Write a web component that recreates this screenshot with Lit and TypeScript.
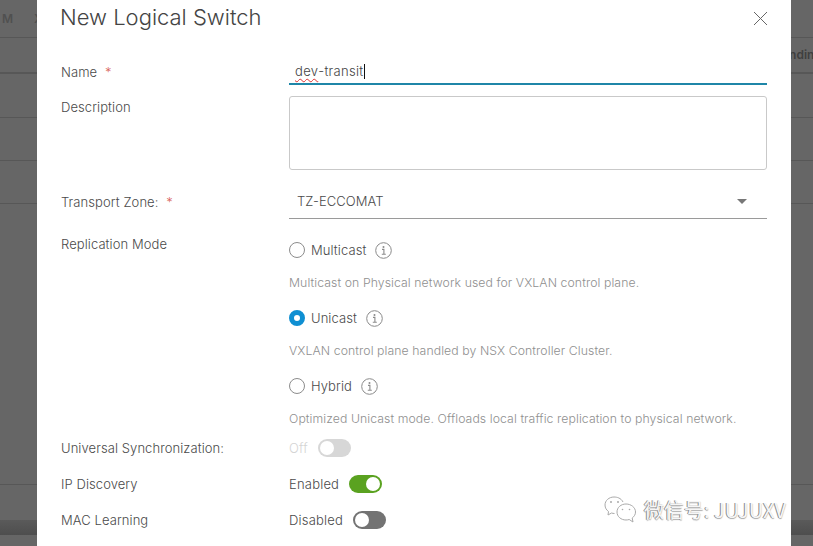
import { LitElement, css, html, svg } from 'lit';
import { customElement } from 'lit/decorators.js';

const infoIcon = svg`<svg class="info" viewBox="0 0 17 17" width="17" height="17" fill="none" stroke="#8a8a8a">
	<circle cx="8.500" cy="8.500" r="7.800" stroke-width="1"/>
	<path d="M7 7.400h1.900v4.700M6.800 12.300h4" stroke-width="1.100"/>
	<circle cx="8.500" cy="4.900" r="1" fill="#8a8a8a" stroke="none"/>
</svg>`;

@customElement('app-root')
export class AppRoot extends LitElement {
	static styles = css`
		:host {
			display: block;
			position: relative;
			width: 813px;
			height: 546px;
			overflow: hidden;
			background: #666;
			font-family: 'Inter', 'Liberation Sans', sans-serif;
			font-size: 13px;
			font-weight: 300;
			color: #4a4a4a;
		}

		/* page behind the modal */
		.page {
			display: flex;
			flex-direction: column;
			height: 100%;
		}
		.page-row {
			box-sizing: border-box;
			border-bottom: 1px solid #575757;
			display: flex;
			align-items: center;
			color: #3f3f3f;
			font-size: 12px;
			font-weight: 600;
			flex: none;
		}
		.r0 { height: 38px; padding-left: 2px; gap: 21px; color: #505050; }
		.r1 { height: 36px; padding-left: 778px; padding-bottom: 2px; white-space: nowrap; border-bottom-width: 2px; }
		.r2 { height: 44px; }
		.r3 { height: 43px; }
		.r4 { height: 43px; }
		.r5 { height: 281px; }
		.bar {
			margin-top: 35px;
			height: 15px;
			background: linear-gradient(#5a5a5a, #4e4e4e);
			flex: none;
		}

		.modal {
			position: absolute;
			left: 37px;
			top: 0;
			width: 754px;
			height: 546px;
			box-sizing: border-box;
			padding: 0 24px;
			background: #fff;
			overflow: hidden;
		}
		.head {
			display: flex;
			justify-content: space-between;
			align-items: center;
			height: 34px;
			margin-bottom: 20px;
		}
		h3 {
			margin: 0 0 0 -1px;
			font-size: 22px;
			font-weight: 300;
			color: #444;
		}
		.close { display: block; margin: 2px -1px 0 0; }

		.form {
			display: grid;
			grid-template-columns: 228px 478px;
			grid-auto-rows: auto;
			align-items: start;
			letter-spacing: 0.08px;
		}
		.label {
			line-height: 18px;
			white-space: nowrap;
		}
		.req {
			color: #d8645c;
			margin-left: 4px;
		}
		.name-input {
			box-sizing: border-box;
			height: 31px;
			border-bottom: 2px solid #1f86a8;
			padding: 8px 0 0 6px;
			line-height: 18px;
			letter-spacing: 0.3px;
			color: #444;
			display: flex;
		}
		.spell {
			text-decoration: underline wavy #d33;
			text-decoration-thickness: 1px;
			text-underline-offset: 2px;
		}
		.caret {
			width: 1px;
			height: 15px;
			margin-top: 2px;
			background: #111;
		}
		.textarea {
			box-sizing: border-box;
			height: 74px;
			margin-top: 11px;
			border: 1px solid #c9c9c9;
			border-radius: 3px;
		}
		.select {
			box-sizing: border-box;
			height: 37px;
			margin-top: 12px;
			padding: 2px 20px 0 8px;
			border-bottom: 1px solid #9a9a9a;
			display: flex;
			align-items: center;
			justify-content: space-between;
		}
		.arrow {
			width: 0;
			height: 0;
			border-left: 5px solid transparent;
			border-right: 5px solid transparent;
			border-top: 5px solid #777;
		}
		.radios {
			display: flex;
			flex-direction: column;
			margin-top: 21px;
		}
		.radio {
			display: flex;
			align-items: center;
			height: 20px;
		}
		.dot {
			box-sizing: border-box;
			width: 16px;
			height: 16px;
			border-radius: 50%;
			border: 1px solid #8c8c8c;
			margin-right: 6px;
		}
		.dot.on {
			border: 5px solid #0f8fd2;
		}
		.info { margin-left: 9px; }
		.hint {
			color: #8f8f8f;
			font-size: 12.250px;
			line-height: 18px;
			margin: 14px 0 16px;
			white-space: nowrap;
		}
		.hint.last { margin-bottom: 0; }
		.switch-row {
			display: flex;
			align-items: center;
			gap: 10px;
			height: 18px;
			letter-spacing: 0.2px;
		}
		.toggle {
			box-sizing: border-box;
			width: 33px;
			height: 18px;
			border-radius: 9px;
			padding: 2px;
			background: #737373;
			display: flex;
		}
		.toggle i {
			width: 14px;
			height: 14px;
			border-radius: 50%;
			background: #fff;
		}
		.toggle.green { background: #5aa220; justify-content: flex-end; }
		.toggle.off { background: #d7d7d7; }
		.muted { color: #d4d4d4; }

		.watermark {
			position: absolute;
			left: 604px;
			top: 495px;
			display: flex;
			align-items: center;
			gap: 7px;
			font-family: 'Noto Sans CJK SC', 'Liberation Sans', sans-serif;
			font-size: 20px;
			font-weight: 400;
			color: #f6f6f6;
			text-shadow: -1px 0 0 #8a8a8a, 0 1px 1px #aaa;
			white-space: nowrap;
		}
	`;

	render() {
		return html`
			<div class="page">
				<div class="page-row r0"><span>M</span><span>X</span></div>
				<div class="page-row r1">Binding</div>
				<div class="page-row r2"></div>
				<div class="page-row r3"></div>
				<div class="page-row r4"></div>
				<div class="page-row r5"></div>
				<div class="bar"></div>
			</div>

			<div class="modal">
				<div class="head">
					<h3>New Logical Switch</h3>
					<svg class="close" width="15" height="15" viewBox="0 0 15 15" stroke="#666" stroke-width="1" fill="none">
						<path d="M1 1l13 13M14 1L1 14"/>
					</svg>
				</div>

				<div class="form">
					<div class="label" style="margin-top:9px">Name <span class="req">*</span></div>
					<div class="name-input"><span class="spell">dev</span>-transit<span class="caret"></span></div>

					<div class="label" style="margin-top:13px">Description</div>
					<div class="textarea"></div>

					<div class="label" style="margin-top:23px">Transport Zone: <span class="req">*</span></div>
					<div class="select"><span>TZ-ECCOMAT</span><span class="arrow"></span></div>

					<div class="label" style="margin-top:16px">Replication Mode</div>
					<div class="radios">
						<div class="radio"><span class="dot"></span>Multicast ${infoIcon}</div>
						<div class="hint">Multicast on Physical network used for VXLAN control plane.</div>
						<div class="radio"><span class="dot on"></span>Unicast ${infoIcon}</div>
						<div class="hint">VXLAN control plane handled by NSX Controller Cluster.</div>
						<div class="radio"><span class="dot"></span>Hybrid ${infoIcon}</div>
						<div class="hint last">Optimized Unicast mode. Offloads local traffic replication to physical network.</div>
					</div>

					<div class="label" style="margin-top:11px">Universal Synchronization:</div>
					<div class="switch-row" style="margin-top:11px"><span class="muted">Off</span><span class="toggle off"><i></i></span></div>

					<div class="label" style="margin-top:18px">IP Discovery</div>
					<div class="switch-row" style="margin-top:18px"><span>Enabled</span><span class="toggle green"><i></i></span></div>

					<div class="label" style="margin-top:18px">MAC Learning</div>
					<div class="switch-row" style="margin-top:18px"><span>Disabled</span><span class="toggle"><i></i></span></div>
				</div>
			</div>

			<div class="watermark">
				<svg width="33" height="28" viewBox="0 0 33 28" fill="none" stroke="#aaa" stroke-width="1">
					<path d="M19 6C17 2 13 1 10 1 5 1 1 4.500 1 9c0 3 1.500 5 3.500 6.500L4 19l3.500-2c1 .3 2 .5 3 .5"/>
					<path d="M22 8c-5 0-9 3.400-9 8s4 8 9 8c1.200 0 2.200-.2 3.200-.5L29 26l-.8-4c2-1.500 3.300-3.500 3.300-6 0-4.600-4.500-8-9.500-8z"/>
					<circle cx="7" cy="6" r="1" fill="#aaa" stroke="none"/>
					<circle cx="14" cy="6" r="1" fill="#aaa" stroke="none"/>
					<circle cx="18.500" cy="13.500" r=".8" fill="#aaa" stroke="none"/>
					<circle cx="25.500" cy="13.500" r=".8" fill="#aaa" stroke="none"/>
				</svg>
				<span>微信号: JUJUXV</span>
			</div>
		`;
	}
}
